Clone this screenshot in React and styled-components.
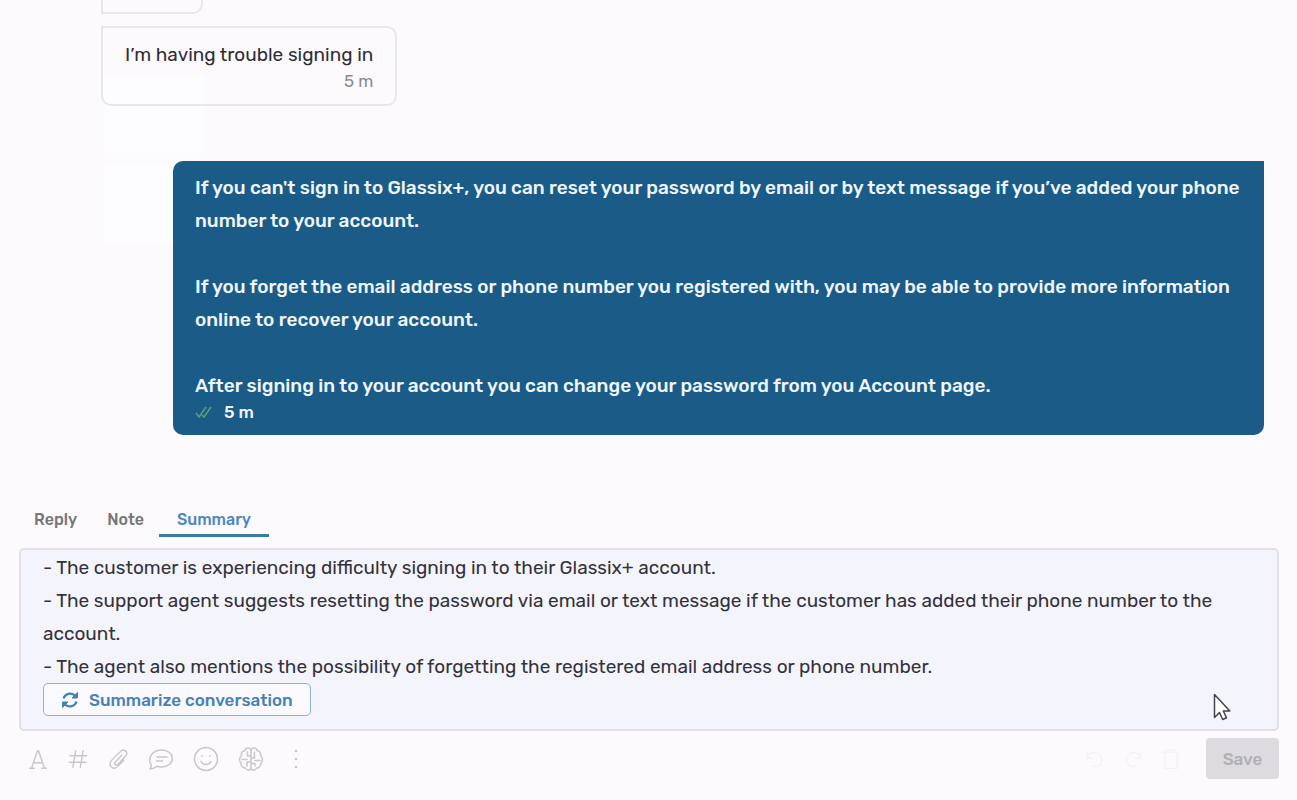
import React, { useState } from "react";
import styled, { createGlobalStyle } from "styled-components";

const GlobalStyle = createGlobalStyle`
    * {
        box-sizing: border-box;
    }

    body {
        margin: 0;
        background-color: #fcfafd;
        font-family: Rubik, Roboto, "Liberation Sans", sans-serif;
        color: #2f2d33;
    }

    button,
    textarea {
        font-family: inherit;
    }
`;

const Page = styled.div`
    display: flex;
    flex-direction: column;
    height: 100vh;
    overflow: hidden;
`;

const Chat = styled.main`
    flex: 1;
    min-height: 0;
    display: flex;
    flex-direction: column;
    justify-content: flex-end;
    padding: 0 33px 69px 101px;
    overflow: hidden;
`;

const Received = styled.div`
    position: relative;
    flex-shrink: 0;
    align-self: flex-start;
    min-width: 102px;
    min-height: 80px;
    margin-bottom: 12px;
    padding: 10px 22px 12px;
    border: 2px solid #e8e7ea;
    border-radius: ${(props) => (props.$last ? "0 10px 10px 10px" : "0 10px 10px 0")};
    font-size: 19px;
    line-height: 33px;

    p {
        margin: 0;
    }
`;

const ReceivedTime = styled.div`
    font-size: 17px;
    line-height: 20px;
    text-align: right;
    color: #8b898f;
`;

const Ghost = styled.div`
    position: absolute;
    z-index: -1;
    top: ${(props) => props.$top}px;
    left: 1px;
    width: 100px;
    height: 77px;
    background-color: #fdfcfe;
`;

const Sent = styled.div`
    flex-shrink: 0;
    margin: 43px 0 0 72px;
    padding: 10px 22px 13px;
    border-radius: 10px 0 10px 10px;
    background-color: #1a5c87;
    color: #eef6fb;
    font-size: 19px;
    font-weight: 500;
    line-height: 33px;

    p {
        margin: 0 0 33px;
    }

    p:last-of-type {
        margin: 0;
    }
`;

const SentTime = styled.div`
    display: flex;
    align-items: center;
    gap: 12px;
    font-size: 17px;
    line-height: 20px;
`;

const Composer = styled.section`
    flex-shrink: 0;
    padding: 0 18px 21px 19px;
`;

const Tabs = styled.div`
    display: flex;
    margin-bottom: 11px;
`;

const Tab = styled.button`
    height: 33px;
    padding: 0 ${(props) => (props.$active ? 18 : 15)}px;
    border: 0;
    border-bottom: 3px solid ${(props) => (props.$active ? "#367f9f" : "transparent")};
    background: none;
    color: ${(props) => (props.$active ? "#4a88bd" : "#77747a")};
    font-size: 16px;
    font-weight: 500;
    cursor: pointer;
`;

const SummaryBox = styled.div`
    position: relative;
    padding: 1px 22px 13px;
    border: 2px solid #e2e0e6;
    border-radius: 5px;
    background-color: #f4f4fd;
`;

const SummaryText = styled.textarea`
    display: block;
    width: 100%;
    height: 132px;
    padding: 0;
    border: 0;
    outline: none;
    resize: none;
    overflow: hidden;
    background: none;
    color: #343239;
    font-size: 19px;
    line-height: 33px;
`;

const SummarizeButton = styled.button`
    display: flex;
    align-items: center;
    gap: 10px;
    height: 33px;
    padding: 0 17px;
    border: 1px solid #86b4d2;
    border-radius: 5px;
    background-color: #f9f9fe;
    color: #4681b5;
    font-size: 17px;
    font-weight: 500;
    cursor: pointer;
`;

const Pointer = styled.svg`
    position: absolute;
    right: 46px;
    bottom: 8px;
    width: 18px;
    height: 28px;
`;

const Toolbar = styled.div`
    display: flex;
    align-items: center;
    padding-top: 7px;
`;

const Tools = styled.div`
    display: flex;
    align-items: center;
    gap: 16px;
    margin-left: ${(props) => (props.$end ? "auto" : "7px")};
    margin-right: ${(props) => (props.$end ? "24px" : "0")};
    color: ${(props) => (props.$end ? "#f3f1f4" : "#c8c6ca")};
`;

const ToolButton = styled.button`
    display: flex;
    justify-content: center;
    width: ${(props) => props.$width}px;
    padding: 0;
    border: 0;
    background: none;
    color: inherit;
    cursor: pointer;
`;

const SaveButton = styled.button`
    width: 73px;
    height: 41px;
    border: 0;
    border-radius: 4px;
    background-color: #dddbdf;
    color: #b1afb3;
    font-size: 17px;
    font-weight: 500;
`;

const Icon = ({ size = 26, children }) => (
    <svg
        width={size}
        height={size}
        viewBox="0 0 26 26"
        fill="none"
        stroke="currentColor"
        strokeWidth="1.5"
        strokeLinecap="round"
        strokeLinejoin="round"
        aria-hidden="true"
    >
        {children}
    </svg>
);

const tools = [
    {
        label: "Text format",
        width: 24,
        icon: <path d="M6 23 12.500 4h1L20 23M8.500 17h9M4 23h5M17 23h5" />,
    },
    {
        label: "Hashtag",
        width: 24,
        icon: <path d="M10.500 4 7.500 22M18.500 4 15.500 22M4.500 9.500h18M3.500 16.500h18" />,
    },
    {
        label: "Attach file",
        width: 24,
        icon: (
            <path d="m17 9-7 7.500c-1.800 2.200.8 4.500 2.800 2.500l8.200-9c4.200-4.800-1.800-9-5.500-5L6 14.500c-5 5.500 2 11.500 7 6.500l6.500-7" />
        ),
    },
    {
        label: "Canned replies",
        width: 29,
        icon: (
            <path d="M2 23c1.200-1.400 1.500-2.800 1-4.500C-1 11.500 5 4 13.500 4 20 4 24.500 7.800 24.500 12.500S20 21 13.500 21c-1.800 0-3.300-.2-4.700-.7C6.800 22 4.500 23 2 23ZM9 11h10M8.500 15h6" />
        ),
    },
    {
        label: "Emoji",
        width: 29,
        icon: (
            <>
                <circle cx="13" cy="13" r="11.500" />
                <path d="M8 15.500c2 4 8 4 10 0M9 9.800v.4M17 9.800v.4" />
            </>
        ),
    },
    {
        label: "AI assistant",
        width: 29,
        icon: (
            <path d="M13 4v18M13 4C12 1 7.500 1.500 7 4.500 4 5 3 7.500 3.500 9.500 1 11.500 1 15 3 17c0 3 2 5 4.500 5C9 25 12.500 25 13 22M13 4c1-3 5.500-2.500 6 .5 3 .5 4 3 3.500 5 2.500 2 2.500 5.500.5 7.500 0 3-2 5-4.500 5-1.500 3-5 3-5.500 0M9.500 6v4H13M4 13.500h5M9 20v-4h4M16.500 6v6H13M17 14.500h5M13 17.500h4V20" />
        ),
    },
    {
        label: "More",
        width: 29,
        icon: <path strokeWidth="2.500" d="M13 5v.1M13 13v.1M13 21v.1" />,
    },
];

const historyTools = [
    { label: "Undo", icon: <path d="M4 5v7h7M4 12C7 2 21 4 21 14c0 6-6 10-12 7" /> },
    { label: "Redo", icon: <path d="M22 5v7h-7M22 12C19 2 5 4 5 14c0 6 6 10 12 7" /> },
    { label: "Delete", icon: <path d="M3 5h20M9 5V2h8v3M5.500 5v19h15V5" /> },
];

const summary = `- The customer is experiencing difficulty signing in to their Glassix+ account.
- The support agent suggests resetting the password via email or text message if the customer has added their phone number to the account.
- The agent also mentions the possibility of forgetting the registered email address or phone number.`;

const App = () => {
    const [activeTab, setActiveTab] = useState("Summary");
    const [text, setText] = useState(summary);

    return (
        <>
            <GlobalStyle />
            <Page>
                <Chat>
                    <Received />
                    <Received $last>
                        <Ghost $top={48} />
                        <Ghost $top={138} />
                        <p>I’m having trouble signing in</p>
                        <ReceivedTime>5 m</ReceivedTime>
                    </Received>
                    <Sent>
                        <p>
                            If you can't sign in to Glassix+, you can reset your password by email or by text
                            message if you’ve added your phone number to your account.
                        </p>
                        <p>
                            If you forget the email address or phone number you registered with, you may be
                            able to provide more information online to recover your account.
                        </p>
                        <p>
                            After signing in to your account you can change your password from you Account
                            page.
                        </p>
                        <SentTime>
                            <svg width="17" height="14" viewBox="0 0 17 14" fill="none" stroke="#5f9c84" strokeWidth="1.500">
                                <path d="m1 8 3 4 7-10M7 10l2 2 7-10" />
                            </svg>
                            5 m
                        </SentTime>
                    </Sent>
                </Chat>
                <Composer>
                    <Tabs role="tablist">
                        {["Reply", "Note", "Summary"].map((tab) => (
                            <Tab
                                key={tab}
                                role="tab"
                                aria-selected={activeTab === tab}
                                $active={activeTab === tab}
                                onClick={() => setActiveTab(tab)}
                            >
                                {tab}
                            </Tab>
                        ))}
                    </Tabs>
                    <SummaryBox>
                        <SummaryText
                            aria-label="Summary"
                            spellCheck={false}
                            value={text}
                            onChange={(e) => setText(e.target.value)}
                        />
                        <SummarizeButton>
                            <svg width="18" height="18" viewBox="0 0 18 18" fill="none" stroke="currentColor" strokeWidth="2.200">
                                <path d="M2.500 7.500C4 2.500 10 1 14 4.500M15.500 10.500C14 15.500 8 17 4 13.500" />
                                <path d="M16.500 1.500V7H11ZM1.500 16.500V11H7Z" fill="currentColor" strokeWidth="1" />
                            </svg>
                            Summarize conversation
                        </SummarizeButton>
                        <Pointer viewBox="0 0 18 28" aria-hidden="true">
                            <path
                                d="M1.500 1.500v23l5-5 3.200 7 3.800-1.800-3.200-6.700h6.500Z"
                                fill="#fff"
                                stroke="#444249"
                                strokeWidth="1.500"
                                strokeLinejoin="round"
                            />
                        </Pointer>
                    </SummaryBox>
                    <Toolbar>
                        <Tools>
                            {tools.map((tool) => (
                                <ToolButton key={tool.label} aria-label={tool.label} $width={tool.width}>
                                    <Icon>{tool.icon}</Icon>
                                </ToolButton>
                            ))}
                        </Tools>
                        <Tools $end>
                            {historyTools.map((tool) => (
                                <ToolButton key={tool.label} aria-label={tool.label} $width={22}>
                                    <Icon size={22}>{tool.icon}</Icon>
                                </ToolButton>
                            ))}
                        </Tools>
                        <SaveButton disabled>Save</SaveButton>
                    </Toolbar>
                </Composer>
            </Page>
        </>
    );
};

export default App;
